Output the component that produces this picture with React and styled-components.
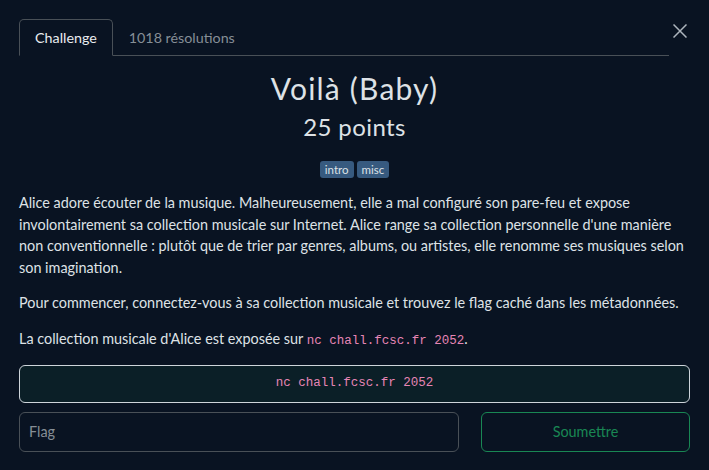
import React from "react";
import styled, { createGlobalStyle } from "styled-components";

const GlobalStyle = createGlobalStyle`
  html, body {
    margin: 0;
    background: #091322;
  }
  body {
    font-family: Lato, "Noto Sans", sans-serif;
    font-size: 14.4px;
    line-height: 1.5;
    color: #dee2e6;
  }
`;

const Modal = styled.div`
  width: 709px;
  height: 470px;
  box-sizing: border-box;
  padding: 19px 19px 0 19px;
  background: #091322;
  overflow: hidden;
`;

const Header = styled.div`
  display: flex;
  align-items: flex-start;
`;

const Tabs = styled.div`
  flex: 1;
  display: flex;
  border-bottom: 1px solid #495057;
`;

const Tab = styled.div`
  padding: 0 15px;
  height: 35px;
  display: flex;
  align-items: center;
  font-size: 14.3px;
  margin-bottom: -1px;
  border: 1px solid ${({ active }) => (active ? "#495057" : "transparent")};
  border-bottom-color: ${({ active }) => (active ? "#091322" : "transparent")};
  border-radius: 5px 5px 0 0;
  color: ${({ active }) => (active ? "#e9ecef" : "#868e96")};
`;

const Close = styled.button`
  width: 21px;
  height: 21px;
  margin-top: 1px;
  padding: 0;
  background: transparent;
  border: 0;
  color: #adb5bd;
  display: flex;
  align-items: center;
  justify-content: center;
`;

const Title = styled.h1`
  margin: 14px 0 0 0;
  text-align: center;
  font-weight: 400;
  font-size: 30px;
  line-height: 36px;
  letter-spacing: 1.2px;
  color: #dee2e6;
`;

const Points = styled.h2`
  margin: 6px 0 0 0;
  text-align: center;
  font-weight: 400;
  font-size: 24px;
  line-height: 30px;
  letter-spacing: 0.4px;
  color: #dee2e6;
`;

const Tags = styled.div`
  display: flex;
  justify-content: center;
  gap: 3px;
  margin-top: 19px;
`;

const Tag = styled.span`
  background: #375a7f;
  color: #dee2e6;
  font-size: 11.5px;
  line-height: 17px;
  padding: 0 5px;
  border-radius: 3px;
`;

const Description = styled.div`
  margin-top: 14px;
  line-height: 21.6px;

  p {
    margin: 0 0 14px 0;
  }

  p:last-child {
    margin-bottom: 12px;
  }
`;

const Code = styled.code`
  font-family: "Liberation Mono", monospace;
  font-size: 12.5px;
  color: #e685b5;
`;

const CodeBox = styled.div`
  height: 36px;
  border: 1px solid #ced4da;
  border-radius: 6px;
  background: #0b1f27;
  display: flex;
  align-items: center;
  justify-content: center;
`;

const FormRow = styled.div`
  display: grid;
  grid-template-columns: 440px 209px;
  justify-content: space-between;
  margin-top: 9px;
`;

const Input = styled.input`
  height: 40px;
  box-sizing: border-box;
  background: transparent;
  border: 1px solid #495057;
  border-radius: 6px;
  padding: 0 9px;
  font-family: Lato, sans-serif;
  font-size: 14.4px;
  color: #dee2e6;
  outline: none;

  &::placeholder {
    color: #868e96;
  }
`;

const Submit = styled.button`
  height: 40px;
  background: transparent;
  border: 1px solid #198754;
  border-radius: 6px;
  font-family: Lato, sans-serif;
  font-size: 14.4px;
  color: #198754;
`;

export default function App() {
  return (
    <>
      <GlobalStyle />
      <Modal>
        <Header>
          <Tabs>
            <Tab active>Challenge</Tab>
            <Tab>1018 résolutions</Tab>
          </Tabs>
          <Close aria-label="Fermer">
            <svg width="14" height="14" viewBox="0 0 14 14">
              <path d="M0.5 0.5L13.5 13.5M13.5 0.5L0.5 13.5" stroke="currentColor" strokeWidth="1.5" />
            </svg>
          </Close>
        </Header>
        <Title>Voilà (Baby)</Title>
        <Points>25 points</Points>
        <Tags>
          <Tag>intro</Tag>
          <Tag>misc</Tag>
        </Tags>
        <Description>
          <p>
            Alice adore écouter de la musique. Malheureusement, elle a mal configuré son pare-feu et expose
            involontairement sa collection musicale sur Internet. Alice range sa collection personnelle d'une manière
            non conventionnelle : plutôt que de trier par genres, albums, ou artistes, elle renomme ses musiques selon
            son imagination.
          </p>
          <p>Pour commencer, connectez-vous à sa collection musicale et trouvez le flag caché dans les métadonnées.</p>
          <p>
            La collection musicale d'Alice est exposée sur <Code>nc chall.fcsc.fr 2052</Code>.
          </p>
        </Description>
        <CodeBox>
          <Code>nc chall.fcsc.fr 2052</Code>
        </CodeBox>
        <FormRow>
          <Input placeholder="Flag" />
          <Submit>Soumettre</Submit>
        </FormRow>
      </Modal>
    </>
  );
}
